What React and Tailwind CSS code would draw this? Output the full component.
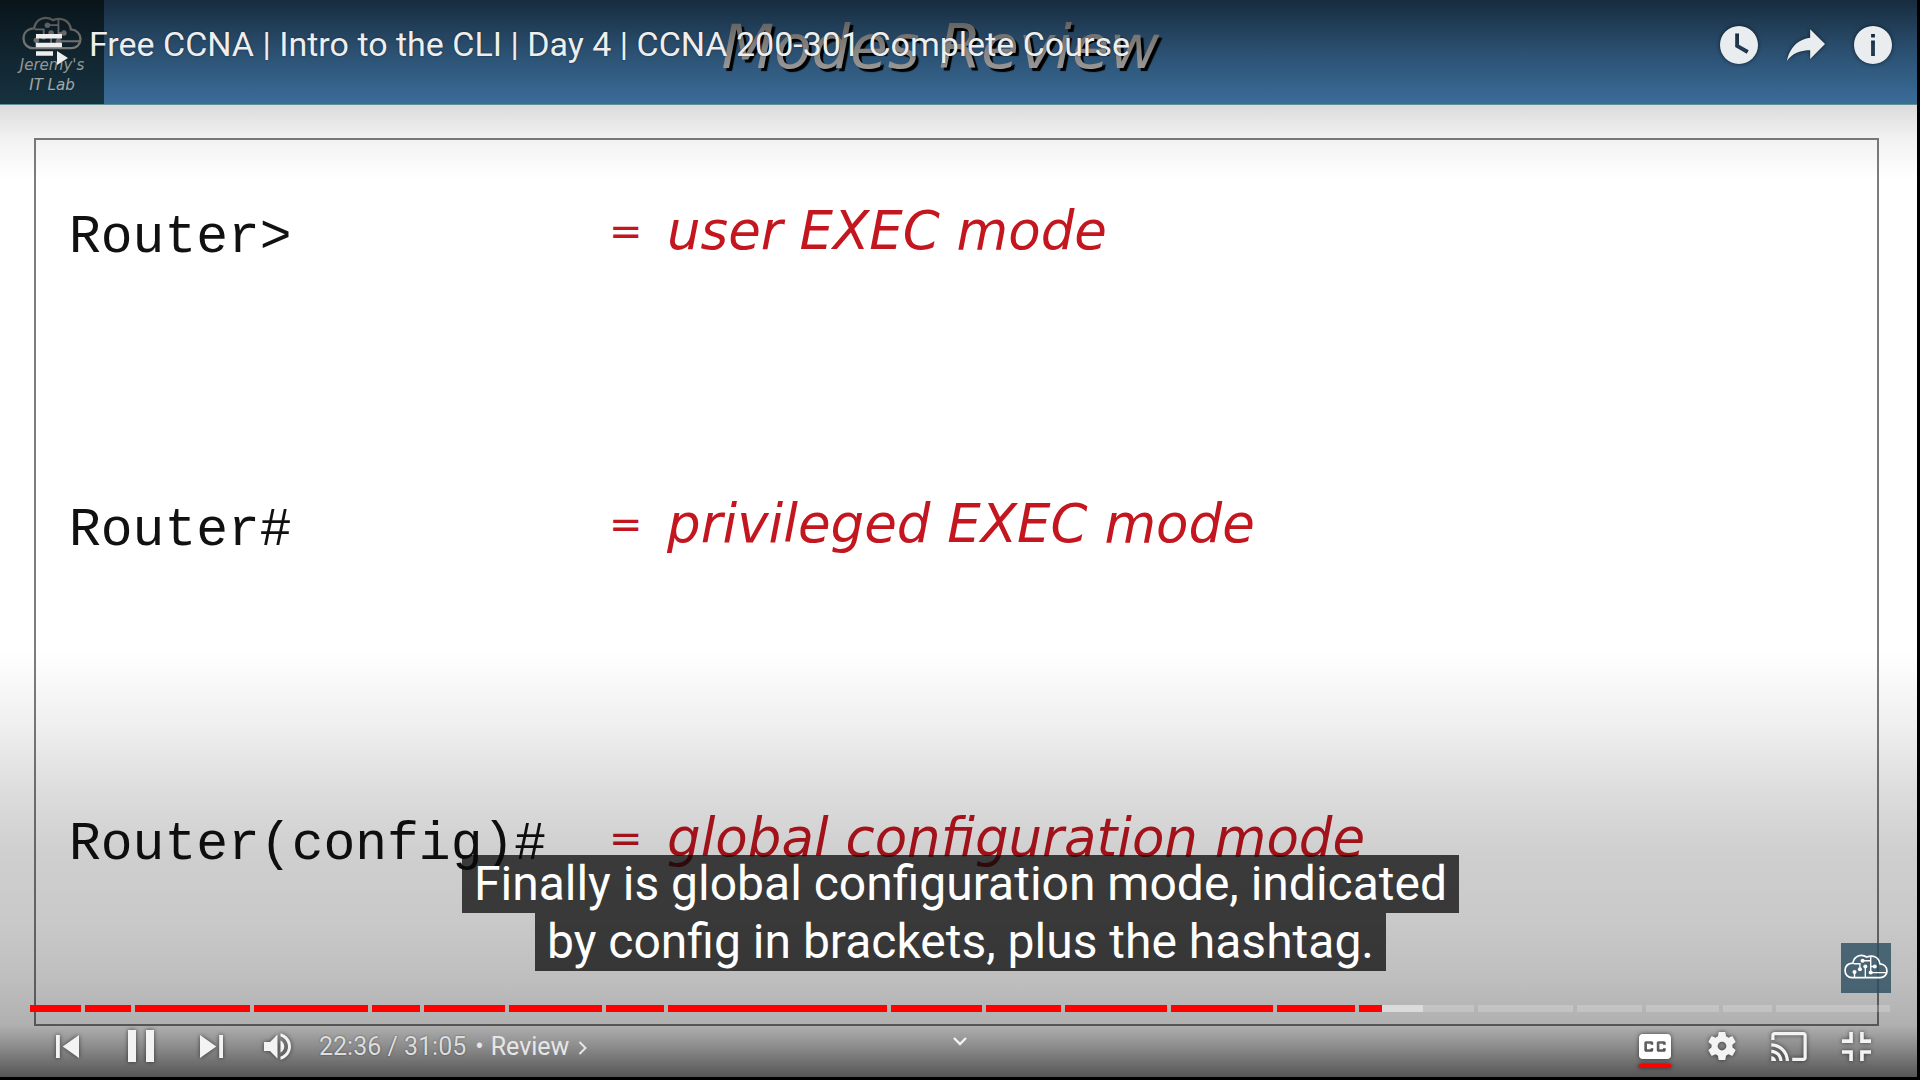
const chapters = [
  { size: 51, played: 100, loaded: 100 },
  { size: 46, played: 100, loaded: 100 },
  { size: 116, played: 100, loaded: 100 },
  { size: 114, played: 100, loaded: 100 },
  { size: 49, played: 100, loaded: 100 },
  { size: 81, played: 100, loaded: 100 },
  { size: 93, played: 100, loaded: 100 },
  { size: 59, played: 100, loaded: 100 },
  { size: 220, played: 100, loaded: 100 },
  { size: 91, played: 100, loaded: 100 },
  { size: 75, played: 100, loaded: 100 },
  { size: 103, played: 100, loaded: 100 },
  { size: 102, played: 100, loaded: 100 },
  { size: 79, played: 100, loaded: 100 },
  { size: 115, played: 20, loaded: 56 },
  { size: 96, played: 0, loaded: 0 },
  { size: 65, played: 0, loaded: 0 },
  { size: 73, played: 0, loaded: 0 },
  { size: 49, played: 0, loaded: 0 },
  { size: 115, played: 0, loaded: 0 },
];

const modes = [
  { prompt: "Router>", meaning: "user EXEC mode" },
  { prompt: "Router#", meaning: "privileged EXEC mode" },
  { prompt: "Router(config)#", meaning: "global configuration mode" },
];

const rowGaps = ["", "mt-[219px]", "mt-[240px]"];

function CloudLogo({ className }) {
  return (
    <svg viewBox="-1 -1 130 74" className={className} fill="none" stroke="currentColor" strokeWidth="5" aria-hidden="true">
      <path d="M22 69H106C118 69 126 60 126 49C126 38 118 29 105 28C103 10 86 0 66 8C50 -2 29 4 25 26C10 27 2 36 2 48C2 60 11 69 22 69Z" />
      <g strokeWidth="4">
        <path d="M54 19H78M78 6V54M80 54H125M27 28H46V43M62 36V69M30 52V69M78 36H90" />
      </g>
      <g fill="currentColor" stroke="none">
        <circle cx="54" cy="19" r="6" />
        <circle cx="78" cy="54" r="6" />
        <circle cx="46" cy="44" r="6" />
        <circle cx="62" cy="36" r="6" />
        <circle cx="30" cy="52" r="6" />
        <circle cx="90" cy="36" r="6" />
      </g>
    </svg>
  );
}

function IconButton({ label, className = "", children }) {
  return (
    <button type="button" aria-label={label} className={`relative flex items-center justify-center drop-shadow-[0_0_2px_rgba(0,0,0,0.6)] ${className}`}>
      {children}
    </button>
  );
}

function Slide() {
  return (
    <div className="col-start-1 row-start-1 mr-[3px] mb-[3px] flex flex-col bg-white">
      <header className="flex h-[105px] border-b border-[#6fa6ac] bg-[#447fb3]">
        <div className="flex w-[104px] flex-col items-center bg-[#1a3a4a] pt-4 text-[#d5dadc]">
          <CloudLogo className="h-[34px] w-[60px] text-[#c4c4c4]" />
          <div className="mt-[5px] text-center font-['DejaVu_Sans',sans-serif] text-[15px] leading-5 italic">
            Jeremy's
            <br />
            IT Lab
          </div>
        </div>
        <h2 className="flex-1 pt-3 pr-[140px] text-center font-['DejaVu_Sans',sans-serif] text-[61px] leading-[70px] text-[#d8d6d3] italic [text-shadow:3px_3px_1px_#000]">
          Modes Review
        </h2>
      </header>
      <main className="mt-[33px] mr-[38px] mb-[51px] ml-[34px] flex-1 border-2 border-[#7d7d7d] px-[33px] pt-[61px]">
        {modes.map((m, i) => (
          <div key={m.prompt} className={`flex items-start whitespace-nowrap ${rowGaps[i]}`}>
            <span className="w-[540px] font-['Liberation_Mono',monospace] text-[53px] leading-[74px] text-[#111]">{m.prompt}</span>
            <span className="flex font-['DejaVu_Sans',sans-serif] text-[53px] leading-[60px] text-[#c3161f] italic">
              <span className="w-[58px] text-[40px]">=</span>
              {m.meaning}
            </span>
          </div>
        ))}
      </main>
    </div>
  );
}

function TopBar() {
  return (
    <div className="flex h-[180px] items-start bg-[linear-gradient(to_bottom,rgba(0,0,0,0.66)_0px,rgba(0,0,0,0.37)_52px,rgba(0,0,0,0.145)_104px,rgba(0,0,0,0.055)_137px,rgba(0,0,0,0)_180px)] pr-[28px] pl-9 text-[#eee]">
      <div className="flex h-[88px] flex-1 items-center">
        <button type="button" aria-label="Playlist" className="mt-[10px]">
          <svg viewBox="0 0 32 31" className="h-[31px] w-8" fill="currentColor">
            <path d="M0 0H26V4.5H0ZM0 8.7H26V13.2H0ZM0 17.3H17V21.8H0ZM21 17V31L32 24Z" />
          </svg>
        </button>
        <h1 className="ml-[21px] text-[34px] leading-10 whitespace-nowrap [text-shadow:0_0_2px_rgba(0,0,0,0.5)]">
          <a href="#video">Free CCNA | Intro to the CLI | Day 4 | CCNA 200-301 Complete Course</a>
        </h1>
      </div>
      <div className="flex h-[90px] items-center gap-[29px] text-[#e9edf0]">
        <IconButton label="Watch later">
          <svg viewBox="8 8 20 20" className="size-[38px]" fill="currentColor">
            <path fillRule="evenodd" d="M18,8 C12.47,8 8,12.47 8,18 C8,23.52 12.47,28 18,28 C23.52,28 28,23.52 28,18 C28,12.47 23.52,8 18,8 Z M16,19.02 L16,12 L18,12 L18,17.86 L23.1,20.81 L22.1,22.54 L16,19.02 Z" />
          </svg>
        </IconButton>
        <IconButton label="Share">
          <svg viewBox="8 8 20 20" className="size-[38px]" fill="currentColor">
            <path d="m 20.20,14.19 0,-4.45 7.79,7.79 -7.79,7.79 0,-4.56 C 16.27,20.69 12.10,21.81 9.34,24.76 8.80,25.13 7.60,27.29 8.12,25.65 9.08,21.32 11.80,17.18 15.98,15.38 c 1.33,-0.60 2.76,-0.98 4.21,-1.19 z" />
          </svg>
        </IconButton>
        <IconButton label="More info">
          <svg viewBox="8 8 20 20" className="size-[38px]" fill="currentColor">
            <path fillRule="evenodd" d="M18,8 C12.47,8 8,12.47 8,18 C8,23.52 12.47,28 18,28 C23.52,28 28,23.52 28,18 C28,12.47 23.52,8 18,8 Z M17,12.2H19V14H17Z M17,15.6H19V23.8H17Z" />
          </svg>
        </IconButton>
      </div>
    </div>
  );
}

function Progress() {
  return (
    <div role="progressbar" aria-label="Playback position" aria-valuemin={0} aria-valuemax={1865} aria-valuenow={1356} className="mr-px flex h-[7px] gap-1">
      {chapters.map((c, i) => (
        <div key={i} className="relative basis-0 bg-white/20" style={{ flexGrow: c.size }}>
          <div className="absolute inset-y-0 left-0 bg-white/40" style={{ width: `${c.loaded}%` }} />
          <div className="absolute inset-y-0 left-0 bg-[#ff0000]" style={{ width: `${c.played}%` }} />
        </div>
      ))}
    </div>
  );
}

function Controls() {
  return (
    <div className="mr-px grid h-[68px] grid-cols-[1fr_auto_1fr] text-[#f3f3f3]">
      <div className="flex items-stretch">
        <IconButton label="Previous" className="w-[74px]">
          <svg viewBox="12 12 12 12" className="size-[23px]" fill="currentColor">
            <path d="m 12,12 h 2 v 12 h -2 z m 3.5,6 8.5,6 V 12 z" />
          </svg>
        </IconButton>
        <IconButton label="Pause" className="w-[74px]">
          <svg viewBox="12 10 13 16" className="h-8 w-[26px]" fill="currentColor">
            <path d="M 12,26 16,26 16,10 12,10 z M 21,26 25,26 25,10 21,10 z" />
          </svg>
        </IconButton>
        <IconButton label="Next" className="w-[66px]">
          <svg viewBox="12 12 12 12" className="size-[23px]" fill="currentColor">
            <path d="M 12,24 20.5,18 12,12 V 24 z M 22,12 v 12 h 2 V 12 h -2 z" />
          </svg>
        </IconButton>
        <IconButton label="Mute" className="w-[66px]">
          <svg viewBox="8 9 18 18" className="size-[27px]" fill="currentColor">
            <path d="M8,21 L12,21 L17,26 L17,10 L12,15 L8,15 Z M19,14 L19,22 C20.48,21.32 21.5,19.77 21.5,18 C21.5,16.26 20.48,14.74 19,14 Z M19,11.29 C21.89,12.15 24,14.83 24,18 C24,21.17 21.89,23.85 19,24.71 L19,26.77 C23.01,25.86 26,22.28 26,18 C26,13.72 23.01,10.14 19,9.23 Z" />
          </svg>
        </IconButton>
        <div className="ml-[9px] flex items-center pt-[2px] text-[25px] leading-8 whitespace-nowrap text-[#dddddd] [text-shadow:0_0_2px_rgba(0,0,0,0.5)]">
          <span>22:36 / 31:05</span>
          <button type="button" className="ml-[9px] flex items-center text-[#e6e6e6]">
            <span className="mr-[7px]">•</span>
            Review
            <svg viewBox="0 0 8 14" className="mt-[2px] ml-[9px] h-[14px] w-[9px]" fill="none" stroke="currentColor" strokeWidth="2">
              <path d="M1 1L7 7L1 13" />
            </svg>
          </button>
        </div>
      </div>
      <button type="button" aria-label="More videos" className="flex w-10 justify-center pt-[25px]">
        <svg viewBox="0 0 14 9" className="h-[9px] w-[14px]" fill="none" stroke="currentColor" strokeWidth="2.4">
          <path d="M1 1L7 7L13 1" />
        </svg>
      </button>
      <div className="flex items-stretch justify-end">
        <IconButton label="Subtitles" className="w-[67px]">
          <svg viewBox="9 11 18 14" className="h-[25px] w-8 text-white" fill="currentColor">
            <path fillRule="evenodd" d="M11,11 C9.89,11 9,11.9 9,13 L9,23 C9,24.1 9.89,25 11,25 L25,25 C26.1,25 27,24.1 27,23 L27,13 C27,11.9 26.1,11 25,11 L11,11 Z M17,17 L15.5,17 L15.5,16.5 L13.5,16.5 L13.5,19.5 L15.5,19.5 L15.5,19 L17,19 L17,20 C17,20.55 16.55,21 16,21 L13,21 C12.45,21 12,20.55 12,20 L12,16 C12,15.45 12.45,15 13,15 L16,15 C16.55,15 17,15.45 17,16 L17,17 Z M24,17 L22.5,17 L22.5,16.5 L20.5,16.5 L20.5,19.5 L22.5,19.5 L22.5,19 L24,19 L24,20 C24,20.55 23.55,21 23,21 L20,21 C19.45,21 19,20.55 19,20 L19,16 C19,15.45 19.45,15 20,15 L23,15 C23.55,15 24,15.45 24,16 L24,17 Z" />
          </svg>
          <span className="absolute bottom-3 left-1/2 h-1 w-[33px] -translate-x-1/2 rounded-sm bg-[#ff0000]" />
        </IconButton>
        <IconButton label="Settings" className="w-[67px]">
          <svg viewBox="10 10 16 16" className="size-7" fill="currentColor">
            <path fillRule="evenodd" d="m 23.94,18.78 c .03,-0.25 .05,-0.51 .05,-0.78 0,-0.27 -0.02,-0.52 -0.05,-0.78 l 1.68,-1.32 c .15,-0.12 .19,-0.33 .09,-0.51 l -1.6,-2.76 c -0.09,-0.17 -0.31,-0.24 -0.48,-0.17 l -1.99,.8 c -0.41,-0.32 -0.86,-0.58 -1.35,-0.78 l -0.30,-2.12 c -0.02,-0.19 -0.19,-0.33 -0.39,-0.33 l -3.2,0 c -0.2,0 -0.36,.14 -0.39,.33 l -0.30,2.12 c -0.48,.2 -0.93,.47 -1.35,.78 l -1.99,-0.8 c -0.18,-0.07 -0.39,0 -0.48,.17 l -1.6,2.76 c -0.10,.17 -0.05,.39 .09,.51 l 1.68,1.32 c -0.03,.25 -0.05,.52 -0.05,.78 0,.26 .02,.52 .05,.78 l -1.68,1.32 c -0.15,.12 -0.19,.33 -0.09,.51 l 1.6,2.76 c .09,.17 .31,.24 .48,.17 l 1.99,-0.8 c .41,.32 .86,.58 1.35,.78 l .30,2.12 c .02,.19 .19,.33 .39,.33 l 3.2,0 c .2,0 .36,-0.14 .39,-0.33 l .30,-2.12 c .48,-0.2 .93,-0.47 1.35,-0.78 l 1.99,.8 c .18,.07 .39,0 .48,-0.17 l 1.6,-2.76 c .09,-0.17 .05,-0.39 -0.09,-0.51 l -1.68,-1.32 0,0 z m -5.94,1.72 c -1.38,0 -2.5,-1.12 -2.5,-2.5 0,-1.38 1.12,-2.5 2.5,-2.5 1.38,0 2.5,1.12 2.5,2.5 0,1.38 -1.12,2.5 -2.5,2.5 z" />
          </svg>
        </IconButton>
        <IconButton label="Play on TV" className="w-[67px]">
          <svg viewBox="1 3 22 18" className="h-[29px] w-9" fill="currentColor">
            <path d="M1 18v3h3c0-1.66-1.34-3-3-3zm0-4v2c2.76 0 5 2.24 5 5h2c0-3.87-3.13-7-7-7zm0-4v2c4.97 0 9 4.03 9 9h2c0-6.08-4.93-11-11-11zm20-7H3c-1.1 0-2 .9-2 2v3h2V5h18v14h-7v2h7c1.1 0 2-.9 2-2V5c0-1.1-.9-2-2-2z" />
          </svg>
        </IconButton>
        <IconButton label="Exit full screen" className="w-[68px]">
          <svg viewBox="10 10 16 16" className="size-[29px]" fill="currentColor">
            <path d="m 14,14 -4,0 0,2 6,0 0,-6 -2,0 0,4 z M 22,14 l 0,-4 -2,0 0,6 6,0 0,-2 -4,0 z M 20,26 l 2,0 0,-4 4,0 0,-2 -6,0 0,6 z M 10,22 l 4,0 0,4 2,0 0,-6 -6,0 0,2 z" />
          </svg>
        </IconButton>
      </div>
    </div>
  );
}

export default function App() {
  return (
    <div className="grid min-h-screen bg-black font-['Roboto',sans-serif]">
      <Slide />
      <div className="relative col-start-1 row-start-1 flex flex-col justify-between">
        <TopBar />
        <div className="flex h-[430px] flex-col justify-end bg-[linear-gradient(to_bottom,rgba(0,0,0,0)_0px,rgba(0,0,0,0.063)_77px,rgba(0,0,0,0.137)_143px,rgba(0,0,0,0.19)_203px,rgba(0,0,0,0.21)_270px,rgba(0,0,0,0.255)_330px,rgba(0,0,0,0.31)_375px,rgba(0,0,0,0.475)_400px,rgba(0,0,0,0.665)_427px)] pr-[29px] pl-[30px]">
          <div className="relative pb-[34px]">
            <div className="flex flex-col items-center text-[48px] leading-[58px] whitespace-nowrap text-white">
              <span className="bg-[rgba(8,8,8,0.75)] px-3">Finally is global configuration mode, indicated</span>
              <span className="bg-[rgba(8,8,8,0.75)] px-3">by config in brackets, plus the hashtag.</span>
            </div>
            <a href="#channel" aria-label="Channel" className="absolute right-0 bottom-3 flex size-[50px] items-center justify-center bg-[#2b4d5f]/80 pb-1 text-white">
              <CloudLogo className="h-[25px] w-[44px]" />
            </a>
          </div>
          <Progress />
          <Controls />
        </div>
      </div>
    </div>
  );
}
